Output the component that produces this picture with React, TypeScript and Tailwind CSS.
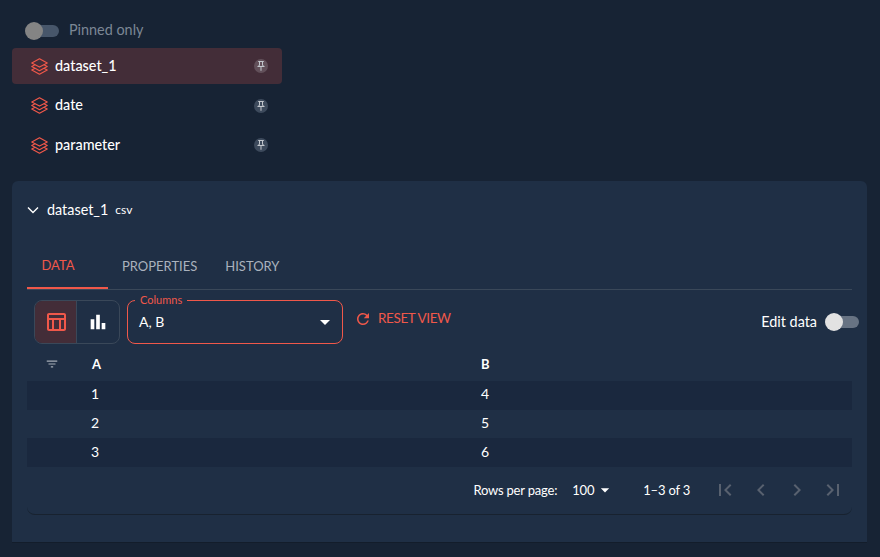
import { HiOutlineSquare3Stack3D } from "react-icons/hi2";
import {
  MdArrowDropDown,
  MdBarChart,
  MdChevronLeft,
  MdChevronRight,
  MdFilterList,
  MdFirstPage,
  MdLastPage,
  MdOutlinePushPin,
  MdOutlineTableChart,
  MdRefresh,
} from "react-icons/md";

// ─── constants ────────────────────────────────────────────────────────────────
const items = ["dataset_1", "date", "parameter"];
const rows = [
  ["1", "4"],
  ["2", "5"],
  ["3", "6"],
];

function Toggle({ knob, track }: { knob: string; track: string }) {
  return (
    <span className={`relative block h-3 w-[33px] rounded-full ${track}`}>
      <span className={`absolute -left-px -top-[3px] size-[18px] rounded-full ${knob}`} />
    </span>
  );
}

export default function App() {
  return (
    <div className="flex h-[557px] w-[880px] flex-col overflow-hidden bg-[#172334] px-3 font-['Lato',sans-serif] text-sm text-white">
      {/* ── pinned list ─────────────────────────────────────────── */}
      <div className="flex h-12 w-[270px] items-center gap-[10px] pl-[14px] pt-[13px] text-[#7c8795]">
        <Toggle knob="bg-[#848484]" track="bg-[#47566a]" />
        <span className="text-[14.4px]">Pinned only</span>
      </div>
      <div className="flex w-[270px] flex-col gap-[3.5px]">
        {items.map((name, i) => (
          <div
            key={name}
            className={`flex h-9 items-center rounded pl-[18px] pr-[14px] ${i === 0 ? "bg-[#432d38]" : ""}`}
          >
            <HiOutlineSquare3Stack3D className="size-[19px] text-[#f0584a]" />
            <span className="ml-[6px] flex-1 text-[14.4px] font-medium">{name}</span>
            <span
              className={`flex size-[14px] items-center justify-center rounded-full ${i === 0 ? "bg-[#62505a]" : "bg-[#3d4a5c]"}`}
            >
              <MdOutlinePushPin className="size-3 text-[#c3c7cd]" />
            </span>
          </div>
        ))}
      </div>

      {/* ── dataset panel ───────────────────────────────────────── */}
      <section className="mt-[18px] flex h-[362px] w-[855px] flex-col rounded-t-md border-b border-[#131d2b] bg-[#1f2f45] px-[15px]">
        <div className="flex h-[58px] shrink-0 items-center">
          <svg viewBox="0 0 12 8" className="h-2 w-3 fill-none stroke-white stroke-[1.4]">
            <path d="M1 1.5 6 6.5 11 1.5" />
          </svg>
          <span className="ml-2 text-[14.4px]">dataset_1</span>
          <span className="ml-[7px] text-[12px]">csv</span>
        </div>

        {/* tabs */}
        <div className="mt-[3px] flex h-[48px] shrink-0 border-b border-[#3a4859] pt-[1px] text-[13px] uppercase text-[#aab2bd]">
          <div className="flex w-[81px] items-center justify-center border-b-2 border-[#f0584a] pr-[19px] text-[#f0584a]">
            Data
          </div>
          <div className="ml-[14px] flex items-center">Properties</div>
          <div className="ml-[28px] flex items-center">History</div>
        </div>

        {/* toolbar */}
        <div className="mt-[10px] flex h-[44px] shrink-0 items-start pl-[7px]">
          <div className="flex h-[44px] w-[86px] overflow-hidden rounded-lg border border-[#3a4859]">
            <div className="flex w-[42px] items-center justify-center border-r border-[#3a4859] bg-[#432d38]">
              <MdOutlineTableChart className="size-6 text-[#f0584a]" />
            </div>
            <div className="flex flex-1 items-center justify-center">
              <MdBarChart className="size-[22px]" />
            </div>
          </div>
          <div className="relative ml-[7px] flex h-[44px] w-[216px] items-center rounded-lg border border-[#f0584a] pl-[11px] pr-[5px]">
            <span className="absolute -top-[9px] left-[7px] bg-[#1f2f45] px-[5px] text-[11px] leading-[15px] text-[#f0584a]">
              Columns
            </span>
            <span className="flex-1 text-[14px]">A, B</span>
            <MdArrowDropDown className="size-6" />
          </div>
          <div className="ml-[11px] flex h-[38px] items-center text-[13.5px] uppercase tracking-[-0.4px] text-[#f0584a]">
            <MdRefresh className="size-[18px]" />
            <span className="ml-[6px]">Reset view</span>
          </div>
          <div className="-mr-[7px] ml-auto mt-[12px] flex h-[20px] items-center">
            <span className="text-[14.4px]">Edit data</span>
            <span className="ml-[9px]">
              <Toggle knob="bg-[#e2e2e2]" track="bg-[#677383]" />
            </span>
          </div>
        </div>

        {/* table */}
        <div className="mt-[3px] flex h-[168px] shrink-0 flex-col rounded-b-lg border-b border-[#18222f] bg-[#1f2f45] text-[14px]">
          <div className="grid h-[34px] shrink-0 grid-cols-[64px_390px_1fr] items-center font-bold">
            <MdFilterList className="ml-[18px] size-[14px] text-[#a6adb6]" />
            <span className="ml-px text-[13px]">A</span>
            <span className="text-[13px]">B</span>
          </div>
          {rows.map(([a, b], i) => (
            <div
              key={a}
              className={`grid h-[28.67px] shrink-0 grid-cols-[64px_390px_1fr] items-center pb-[2px] ${i === 1 ? "" : "bg-[#1a283e]"}`}
            >
              <span />
              <span>{a}</span>
              <span>{b}</span>
            </div>
          ))}
          <div className="flex flex-1 items-center justify-end pr-[7px] text-[13px] tracking-[-0.2px]">
            <span>Rows per page:</span>
            <span className="ml-[15px]">100</span>
            <MdArrowDropDown className="ml-[1px] size-[20px]" />
            <span className="ml-[28px]">1–3 of 3</span>
            <div className="ml-[23px] flex gap-[12px] text-[#58616f]">
              <MdFirstPage className="size-6" />
              <MdChevronLeft className="size-6" />
              <MdChevronRight className="size-6" />
              <MdLastPage className="size-6" />
            </div>
          </div>
        </div>
      </section>
    </div>
  );
}
